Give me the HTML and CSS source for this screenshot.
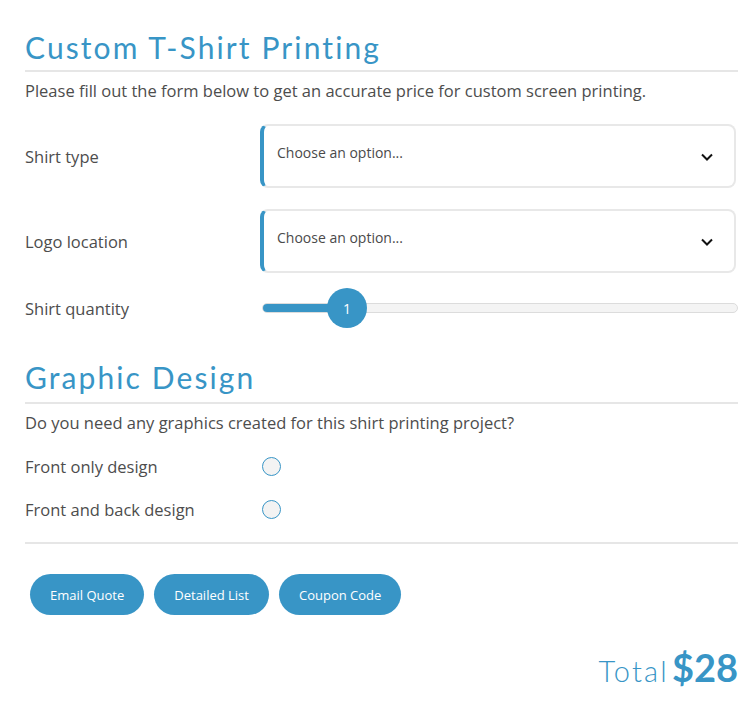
FILE: index.html
```html
<!DOCTYPE html>
<html>
<head>
<meta charset="utf-8">
<link rel="stylesheet" href="styles.css">
</head>
<body>
<div class="calc">
  <h2 class="section-title">Custom T-Shirt Printing</h2>
  <p class="desc">Please fill out the form below to get an accurate price for custom screen printing.</p>

  <div class="row row-select">
    <div class="label">Shirt type</div>
    <div class="select">
      <span>Choose an option...</span>
      <svg class="chev" width="14" height="10" viewBox="0 0 14 10"><path d="M2 2.5 L7 7.5 L12 2.5" fill="none" stroke="#111" stroke-width="2"/></svg>
    </div>
  </div>

  <div class="row row-select">
    <div class="label">Logo location</div>
    <div class="select">
      <span>Choose an option...</span>
      <svg class="chev" width="14" height="10" viewBox="0 0 14 10"><path d="M2 2.5 L7 7.5 L12 2.5" fill="none" stroke="#111" stroke-width="2"/></svg>
    </div>
  </div>

  <div class="row row-slider">
    <div class="label">Shirt quantity</div>
    <div class="slider">
      <div class="track"><div class="fill" style="width:85px"></div></div>
      <div class="thumb" style="left:85px">1</div>
    </div>
  </div>

  <h2 class="section-title second">Graphic Design</h2>
  <p class="desc">Do you need any graphics created for this shirt printing project?</p>

  <div class="radios">
    <div class="row row-radio">
      <div class="label">Front only design</div>
      <div class="radio"></div>
    </div>
    <div class="row row-radio">
      <div class="label">Front and back design</div>
      <div class="radio"></div>
    </div>
  </div>

  <hr class="sep">

  <div class="buttons">
    <button class="btn">Email Quote</button>
    <button class="btn">Detailed List</button>
    <button class="btn">Coupon Code</button>
  </div>

  <div class="total">
    <span class="total-label">Total</span><span class="total-value">$28</span>
  </div>
</div>
</body>
</html>
```

FILE: styles.css
```css
html, body {
  margin: 0;
  padding: 0;
  background: #fff;
}
body {
  font-family: "Open Sans", "Noto Sans", sans-serif;
  color: #4d4d4d;
}
.calc {
  padding: 27px 15px 0 25px;
}
.section-title {
  margin: 0;
  font-family: "Lato", "Noto Sans", sans-serif;
  font-weight: 400;
  font-size: 30px;
  letter-spacing: 2.1px;
  line-height: 40px;
  color: #3895c6;
  padding-bottom: 3px;
  border-bottom: 2px solid #e6e6e6;
}
.section-title.second {
  margin-top: 28px;
  padding-bottom: 5px;
}
.desc {
  margin: 0;
  padding-top: 8px;
  font-size: 16.5px;
  line-height: 22px;
  color: #4d4d4d;
}
.row {
  display: flex;
  align-items: center;
}
.label {
  width: 235px;
  font-size: 16.5px;
  color: #4d4d4d;
}
.row-select {
  height: 64px;
  margin-top: 21px;
}
.desc + .row-select {
  margin-top: 22px;
}
.select {
  flex: 1;
  height: 64px;
  box-sizing: border-box;
  border: 2px solid #e8e8e8;
  border-left: 4px solid #3895c6;
  border-radius: 8px;
  display: flex;
  align-items: center;
  justify-content: space-between;
  padding: 0 20px 0 13px;
  margin-right: 2px;
}
.select span {
  font-size: 14px;
  color: #4a4a4a;
  margin-top: -8px;
}
.chev {
  margin-top: 2px;
}
.row-slider {
  margin-top: 14px;
  height: 42px;
}
.slider {
  flex: 1;
  position: relative;
  height: 42px;
  margin-left: 2px;
}
.track {
  position: absolute;
  left: 0;
  right: 0;
  top: 16px;
  height: 10px;
  box-sizing: border-box;
  border: 1px solid #dcdcdc;
  background: #f4f4f4;
  border-radius: 5px;
  overflow: hidden;
}
.fill {
  height: 100%;
  background: #3895c6;
}
.thumb {
  position: absolute;
  top: 1px;
  width: 40px;
  height: 40px;
  margin-left: -20px;
  border-radius: 50%;
  background: #3895c6;
  color: #fff;
  font-size: 14px;
  display: flex;
  align-items: center;
  justify-content: center;
}
.radios {
  margin-top: 11px;
}
.row-radio {
  height: 43px;
}
.radio {
  width: 19px;
  height: 19px;
  box-sizing: border-box;
  border: 1px solid #3895c6;
  border-radius: 50%;
  background: #f3f3f3;
  margin-left: 2px;
}
.sep {
  margin: 11px 0 0 0;
  border: 0;
  border-top: 2px solid #e6e6e6;
}
.buttons {
  display: flex;
  gap: 10px;
  padding-left: 5px;
  margin-top: 30px;
}
.btn {
  height: 41px;
  border: 0;
  border-radius: 21px;
  background: #3895c6;
  color: #fff;
  font-family: "Open Sans", "Noto Sans", sans-serif;
  font-size: 13px;
  padding: 0 20px;
}
.total {
  margin-top: 27px;
  text-align: right;
  color: #3895c6;
  font-family: "Lato", "Noto Sans", sans-serif;
  line-height: 50px;
}
.total-label {
  font-size: 29px;
  font-weight: 300;
  letter-spacing: 2.2px;
  margin-right: 3px;
}
.total-value {
  font-size: 38px;
  font-weight: 700;
}
```
